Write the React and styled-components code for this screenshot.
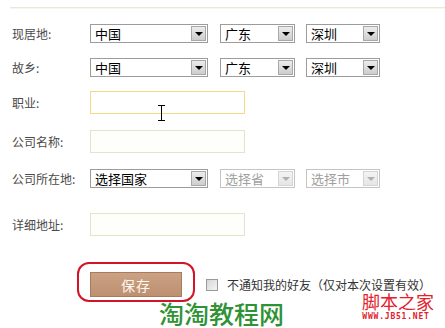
import styled, { createGlobalStyle } from "styled-components";

const GlobalStyle = createGlobalStyle`
  html, body {
    margin: 0;
    padding: 0;
    background: #ffffff;
  }
  body {
    font-family: "Noto Sans CJK SC", "Liberation Sans", sans-serif;
  }
`;

const regions = ["中国", "广东", "深圳"];

export default function App() {
  return (
    <Page>
      <GlobalStyle />
      <TopRule />
      <Form>
        <Row>
          <Label>现居地:</Label>
          <SelectGroup values={regions} />
        </Row>
        <Row>
          <Label>故乡:</Label>
          <SelectGroup values={regions} />
        </Row>
        <Row $space={14}>
          <Label>职业:</Label>
          <Field $focused>
            <Cursor viewBox="0 0 9 16" width="9" height="16">
              <path d="M1 0.5h7M1 15.5h7M4.5 0.5v15" stroke="#000" strokeWidth="1" fill="none" />
            </Cursor>
          </Field>
        </Row>
        <Row $space={16}>
          <Label>公司名称:</Label>
          <Field />
        </Row>
        <Row $space={16}>
          <Label>公司所在地:</Label>
          <Selects>
            <Select $width={118}>
              <SelectText>选择国家</SelectText>
              <Arrow>
                <Triangle />
              </Arrow>
            </Select>
            <Select $width={75} $disabled>
              <SelectText $disabled>选择省</SelectText>
              <Arrow $disabled>
                <Triangle $disabled />
              </Arrow>
            </Select>
            <Select $width={74} $disabled>
              <SelectText $disabled>选择市</SelectText>
              <Arrow $disabled>
                <Triangle $disabled />
              </Arrow>
            </Select>
          </Selects>
        </Row>
        <Row $space={25}>
          <Label>详细地址:</Label>
          <Field />
        </Row>
        <Actions>
          <SaveWrap>
            <SaveButton>保存</SaveButton>
          </SaveWrap>
          <Notice>
            <CheckBox />
            <NoticeText>不通知我的好友（仅对本次设置有效）</NoticeText>
          </Notice>
        </Actions>
      </Form>
      <GreenMark>淘淘教程网</GreenMark>
      <SiteMark>
        <SiteName>脚本之家</SiteName>
        <SiteUrl>WWW.JB51.NET</SiteUrl>
      </SiteMark>
    </Page>
  );
}

function SelectGroup({ values }) {
  const widths = [118, 75, 74];
  return (
    <Selects>
      {values.map((value, i) => (
        <Select $width={widths[i]} key={value}>
          <SelectText>{value}</SelectText>
          <Arrow>
            <Triangle />
          </Arrow>
        </Select>
      ))}
    </Selects>
  );
}

const Page = styled.div`
  position: relative;
  width: 445px;
  height: 328px;
  overflow: hidden;
  padding-top: 7px;
  box-sizing: border-box;
`;

const TopRule = styled.div`
  margin-left: 10px;
  height: 1px;
  background: #ece8d8;
  box-shadow: 0 1px 0 #f8f6ee;
`;

const Form = styled.div`
  display: flex;
  flex-direction: column;
  padding: 16px 0 0 12px;
`;

const Row = styled.div`
  display: flex;
  align-items: center;
  margin-top: ${(p) => (p.$space === undefined ? 15 : p.$space)}px;

  &:first-child {
    margin-top: 0;
  }
`;

const Label = styled.div`
  width: 78px;
  font-size: 12px;
  color: #4a4a4a;
  line-height: 16px;
`;

const Selects = styled.div`
  display: flex;
  gap: 11px;

  & > :first-child {
    margin-right: 1px;
  }
`;

const Select = styled.div`
  width: ${(p) => p.$width}px;
  height: 19px;
  box-sizing: border-box;
  border: 1px solid ${(p) => (p.$disabled ? "#c4c4c4" : "#9c9c9c")};
  background: #ffffff;
  display: flex;
  align-items: center;
  justify-content: space-between;
  padding: 0 1px 0 4px;
`;

const SelectText = styled.span`
  font-size: 13px;
  line-height: 15px;
  color: ${(p) => (p.$disabled ? "#a0a0a0" : "#000000")};
`;

const Arrow = styled.div`
  width: 15px;
  height: 15px;
  box-sizing: border-box;
  border: 1px solid ${(p) => (p.$disabled ? "#d4d4d4" : "#a8a8a8")};
  background: ${(p) =>
    p.$disabled
      ? "linear-gradient(#f4f4f4, #e6e6e6)"
      : "linear-gradient(#ececec, #cdcdcd)"};
  display: flex;
  align-items: center;
  justify-content: center;
`;

const Triangle = styled.div`
  width: 0;
  height: 0;
  border-left: 4px solid transparent;
  border-right: 4px solid transparent;
  border-top: 4px solid ${(p) => (p.$disabled ? "#b0b0b0" : "#000000")};
`;

const Field = styled.div`
  position: relative;
  width: 155px;
  height: 23px;
  box-sizing: border-box;
  border: 1px solid ${(p) => (p.$focused ? "#f0dc88" : "#e6e2cc")};
  background: ${(p) => (p.$focused ? "#ffffff" : "#fefefa")};
`;

const Cursor = styled.svg`
  position: absolute;
  left: 66px;
  top: 13px;
`;

const Actions = styled.div`
  display: flex;
  align-items: center;
  margin-top: 36px;
  padding-left: 78px;
`;

const SaveWrap = styled.div`
  position: relative;

  &::after {
    content: "";
    position: absolute;
    left: -13px;
    right: -13px;
    top: -10px;
    bottom: -5px;
    border: 2px solid #d21428;
    border-radius: 12px;
  }
`;

const SaveButton = styled.div`
  width: 92px;
  height: 25px;
  box-sizing: border-box;
  border: 1px solid #a57c5c;
  background: linear-gradient(#cba283, #bd9070);
  color: #fff8f0;
  font-size: 14px;
  display: flex;
  align-items: center;
  justify-content: center;
  letter-spacing: 1px;
`;

const Notice = styled.div`
  display: flex;
  align-items: center;
  margin-left: 24px;
`;

const CheckBox = styled.div`
  width: 12px;
  height: 12px;
  box-sizing: border-box;
  border: 1px solid #9a9a9a;
  background: linear-gradient(135deg, #d6d6d6, #f4f4f4);
`;

const NoticeText = styled.span`
  margin-left: 9px;
  font-size: 12px;
  line-height: 14px;
  color: #333333;
`;

const GreenMark = styled.div`
  position: absolute;
  left: 159px;
  top: 297px;
  font-size: 25px;
  font-weight: 500;
  color: #2f9235;
  line-height: 32px;
`;

const SiteMark = styled.div`
  position: absolute;
  left: 358px;
  top: 292px;
  display: flex;
  flex-direction: column;
  align-items: center;
`;

const SiteName = styled.div`
  font-size: 18px;
  line-height: 19px;
  color: #e3202c;
  padding-left: 4px;
`;

const SiteUrl = styled.div`
  margin-top: 1px;
  font-family: "DejaVu Sans Mono", monospace;
  font-size: 8px;
  font-weight: 700;
  line-height: 9px;
  color: #e3202c;
  letter-spacing: 0.8px;
`;
